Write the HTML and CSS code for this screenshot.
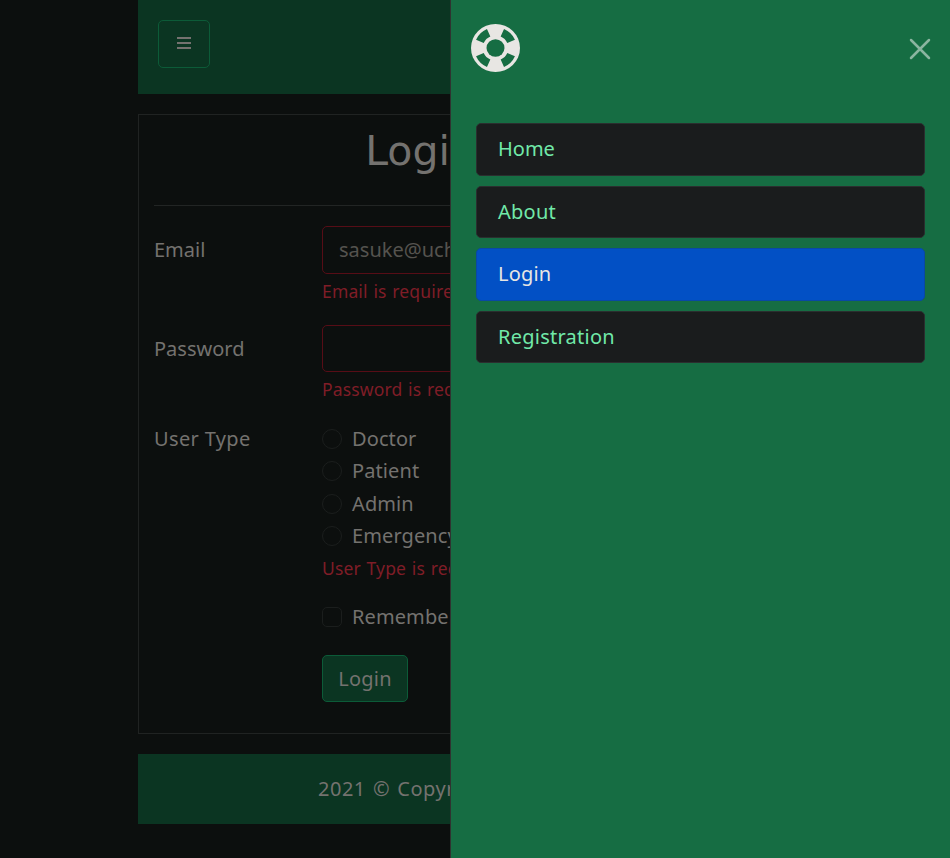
FILE: index.html
```html
<!DOCTYPE html>
<html lang="en">
<head>
<meta charset="utf-8">
<title>Login</title>
<link rel="stylesheet" href="styles.css">
</head>
<body>
<div class="page">
  <header class="topbar">
    <button class="menu-btn" aria-label="Menu"><svg width="14" height="12" viewBox="0 0 14 12"><path d="M0 0h14v2H0zM0 5h14v2H0zM0 10h14v2H0z"/></svg></button>
  </header>
  <main class="card">
    <h1 class="title">Login</h1>
    <form class="form">
      <div class="row">
        <label class="label">Email</label>
        <div><div class="input">sasuke@uchiha</div><p class="error">Email is required</p></div>
      </div>
      <div class="row row-password">
        <label class="label">Password</label>
        <div><div class="input input-password"></div><p class="error">Password is required</p></div>
      </div>
      <div class="row row-type">
        <span class="type-label">User Type</span>
        <div>
          <label class="check"><i class="radio"></i><span>Doctor</span></label>
          <label class="check"><i class="radio"></i><span>Patient</span></label>
          <label class="check"><i class="radio"></i><span>Admin</span></label>
          <label class="check"><i class="radio"></i><span>Emergency</span></label>
          <p class="error error-type">User Type is required</p>
        </div>
      </div>
      <div class="row row-end">
        <span></span>
        <div>
          <label class="check"><i class="radio box"></i><span>Remember me</span></label>
          <button class="submit" type="button">Login</button>
        </div>
      </div>
    </form>
  </main>
  <footer class="footer">2021 © Copyright</footer>
</div>
<aside class="drawer">
  <div class="drawer-head">
    <svg class="logo" viewBox="0 0 48 48" width="49" height="48" preserveAspectRatio="none">
      <circle cx="24" cy="24" r="24" fill="#e8e6e3"/>
      <g fill="none" stroke="#166d43" stroke-width="8.2">
        <path d="M17.3 8.7A16.7 16.7 0 0 0 8.7 17.3"/>
        <path d="M30.7 8.7A16.7 16.7 0 0 1 39.3 17.3"/>
        <path d="M39.3 30.7A16.7 16.7 0 0 1 30.7 39.3"/>
        <path d="M17.3 39.3A16.7 16.7 0 0 1 8.7 30.7"/>
      </g>
      <circle cx="24" cy="24" r="10.8" fill="#e8e6e3"/>
      <circle cx="24" cy="24" r="8.8" fill="#166d43"/>
    </svg>
    <svg class="close" viewBox="0 0 20 20" width="20" height="20"><path d="M1 1l18 18M19 1L1 19"/></svg>
  </div>
  <nav class="nav">
    <a class="link">Home</a>
    <a class="link about">About</a>
    <a class="link active">Login</a>
    <a class="link wide">Registration</a>
  </nav>
</aside>
</body>
</html>
```

FILE: styles.css
```css
* { box-sizing: border-box; }
body {
  margin: 0;
  height: 858px;
  overflow: hidden;
  background: #0c0f0e;
  color: #74726f;
  font: 20px/32px "Noto Sans", "Open Sans", sans-serif;
}
.page { width: 566px; margin-left: 138px; }
.topbar { height: 94px; padding: 20px; background: #0b3522; }
.menu-btn {
  display: flex;
  width: 52px;
  height: 48px;
  padding: 16px 18px;
  border: 1px solid #0c5b38;
  border-radius: 5px;
  background: none;
}
.menu-btn svg { fill: #74726f; flex: none; }
.card {
  height: 620px;
  margin: 20px 0;
  padding: 0 15px;
  border: 1px solid #202322;
}
.title {
  height: 91px;
  margin: 0;
  padding-top: 11px;
  border-bottom: 1px solid #222524;
  font-family: "DejaVu Sans", sans-serif;
  font-size: 41px;
  font-weight: 400;
  line-height: 50px;
  text-align: center;
  text-indent: -1px;
}
.form { padding-top: 20px; }
.row { display: grid; grid-template-columns: 168px 1fr; height: 99px; }
.row-password { height: 98px; }
.row-type { height: 178px; }
.label { line-height: 48px; }
.type-label { line-height: 32px; letter-spacing: .35px; }
.input {
  height: 48px;
  padding: 0 16px;
  border: 1px solid #570d16;
  border-radius: 5px;
  color: #55534e;
  line-height: 46px;
}
.input-password { height: 47px; }
.error {
  margin: 3px 0 0;
  color: #7f1d27;
  font-size: 17.5px;
  letter-spacing: .15px;
  word-spacing: 1px;
  line-height: 28px;
  white-space: nowrap;
}
.error-type { margin-top: 2px; }
.check { display: flex; align-items: center; gap: 10px; height: 32.3px; letter-spacing: .1px; }
.radio { width: 20px; height: 20px; border: 1px solid #1b1e1d; border-radius: 50%; }
.radio.box { border-radius: 5px; }
.submit {
  display: block;
  width: 86px;
  height: 47px;
  margin-top: 22px;
  padding: 0;
  border: 1px solid #0c5b38;
  border-radius: 5px;
  background: #0b3522;
  color: inherit;
  font: inherit;
  letter-spacing: .2px;
}
.footer {
  height: 70px;
  padding-left: 180px;
  background: #0b3522;
  line-height: 70px;
  letter-spacing: .5px;
  word-spacing: 1.5px;
}
.drawer {
  position: fixed;
  inset: 0 0 0 auto;
  width: 500px;
  border-left: 1px solid #303331;
  background: #166d43;
}
.drawer-head { display: flex; justify-content: space-between; padding: 24px 20px 0; height: 123px; }
.close { margin-top: 15px; overflow: visible; fill: none; stroke: #8bb5a0; stroke-width: 2.5; stroke-linecap: round; }
.nav { display: grid; gap: 10px; padding: 0 25px; }
.link {
  height: 52.5px;
  padding: 0 21px;
  border: 1px solid #2b2e2f;
  border-radius: 5px;
  background: #1a1c1d;
  color: #71e9a9;
  line-height: 50px;
}
.link.wide, .link.about { letter-spacing: .25px; }
.link.active { background: #0250c5; border-color: #0a48a4; color: #e8e6e3; letter-spacing: .2px; }
```
